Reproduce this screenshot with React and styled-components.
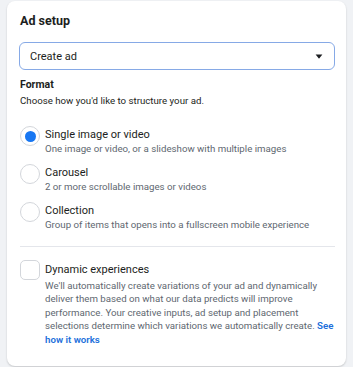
import React from "react";
import styled, { createGlobalStyle } from "styled-components";

const Global = createGlobalStyle`
  html, body { margin: 0; padding: 0; background: #f0f2f5; }
  body { font-family: Roboto, "Liberation Sans", Arial, sans-serif; -webkit-font-smoothing: antialiased; }
`;

const Card = styled.section`
  margin: 1px 7px 4px 7px;
  background: #fff;
  border-radius: 8px;
  box-shadow: 0 1px 2px rgba(0, 0, 0, 0.18);
  padding: 12px 11px 20px 12px;
  color: #1c1e21;
`;

const Title = styled.h2`
  margin: 0 0 0 1px;
  font-size: 12.5px;
  line-height: 16px;
  font-weight: 700;
`;

const Select = styled.div`
  margin-top: 13px;
  height: 28px;
  box-sizing: border-box;
  border: 1px solid #86a9e6;
  border-radius: 6px;
  display: flex;
  align-items: center;
  justify-content: space-between;
  padding: 0 11px 0 10px;
  font-size: 11px;
`;

const Caret = styled.svg`
  width: 8px;
  height: 5px;
  display: block;
`;

const SectionLabel = styled.div`
  margin: 8px 0 0 1px;
  font-size: 10.5px;
  line-height: 14px;
  font-weight: 700;
`;

const Hint = styled.div`
  margin: 2px 0 0 1px;
  font-size: 9.7px;
  line-height: 13px;
`;

const Options = styled.div`
  margin-top: 21px;
  display: flex;
  flex-direction: column;
  gap: 11px;
`;

const Row = styled.div`
  display: flex;
  align-items: flex-start;
  gap: 5px;
  padding-left: 1px;
`;

const Radio = styled.span`
  flex: none;
  width: 20px;
  height: 20px;
  margin-top: -2px;
  box-sizing: border-box;
  border-radius: 50%;
  border: 1px solid #d3d6db;
  display: flex;
  align-items: center;
  justify-content: center;
  &::after {
    content: "";
    width: 11px;
    height: 11px;
    border-radius: 50%;
    background: ${(p) => (p.$checked ? "#1877f2" : "transparent")};
  }
`;

const Box = styled.span`
  flex: none;
  width: 20px;
  height: 20px;
  margin-top: -3px;
  box-sizing: border-box;
  border-radius: 5px;
  border: 1px solid #d3d6db;
`;

const Text = styled.div`
  display: flex;
  flex-direction: column;
`;

const Label = styled.div`
  font-size: 11px;
  line-height: 14px;
  color: #1c1e21;
`;

const Sub = styled.div`
  font-size: 9.7px;
  line-height: 13px;
  color: #606770;
`;

const Desc = styled.div`
  margin-top: 2px;
  font-size: 9.7px;
  line-height: 13.4px;
  color: #606770;
  width: 292px;
`;

const Link = styled.a`
  color: #216fdb;
  font-weight: 600;
  text-decoration: none;
`;

const Divider = styled.hr`
  margin: 15px 0 16px 1px;
  border: 0;
  border-top: 1px solid #e4e6eb;
`;

const options = [
  { title: "Single image or video", sub: "One image or video, or a slideshow with multiple images", checked: true },
  { title: "Carousel", sub: "2 or more scrollable images or videos" },
  { title: "Collection", sub: "Group of items that opens into a fullscreen mobile experience" },
];

export default function App() {
  return (
    <>
      <Global />
      <Card>
        <Title>Ad setup</Title>
        <Select>
          <span>Create ad</span>
          <Caret viewBox="0 0 8 5">
            <path d="M0.6 0.6 H7.4 L4.4 4.2 Q4 4.6 3.6 4.2 Z" fill="#1c1e21" />
          </Caret>
        </Select>
        <SectionLabel>Format</SectionLabel>
        <Hint>Choose how you'd like to structure your ad.</Hint>
        <Options>
          {options.map((o) => (
            <Row key={o.title}>
              <Radio $checked={o.checked} />
              <Text>
                <Label>{o.title}</Label>
                <Sub>{o.sub}</Sub>
              </Text>
            </Row>
          ))}
        </Options>
        <Divider />
        <Row>
          <Box />
          <Text>
            <Label>Dynamic experiences</Label>
            <Desc>
              We'll automatically create variations of your ad and dynamically deliver them based on what our data predicts will improve performance. Your creative inputs, ad setup and placement selections determine which variations we automatically create.{" "}
              <Link href="#">See how it works</Link>
            </Desc>
          </Text>
        </Row>
      </Card>
    </>
  );
}
